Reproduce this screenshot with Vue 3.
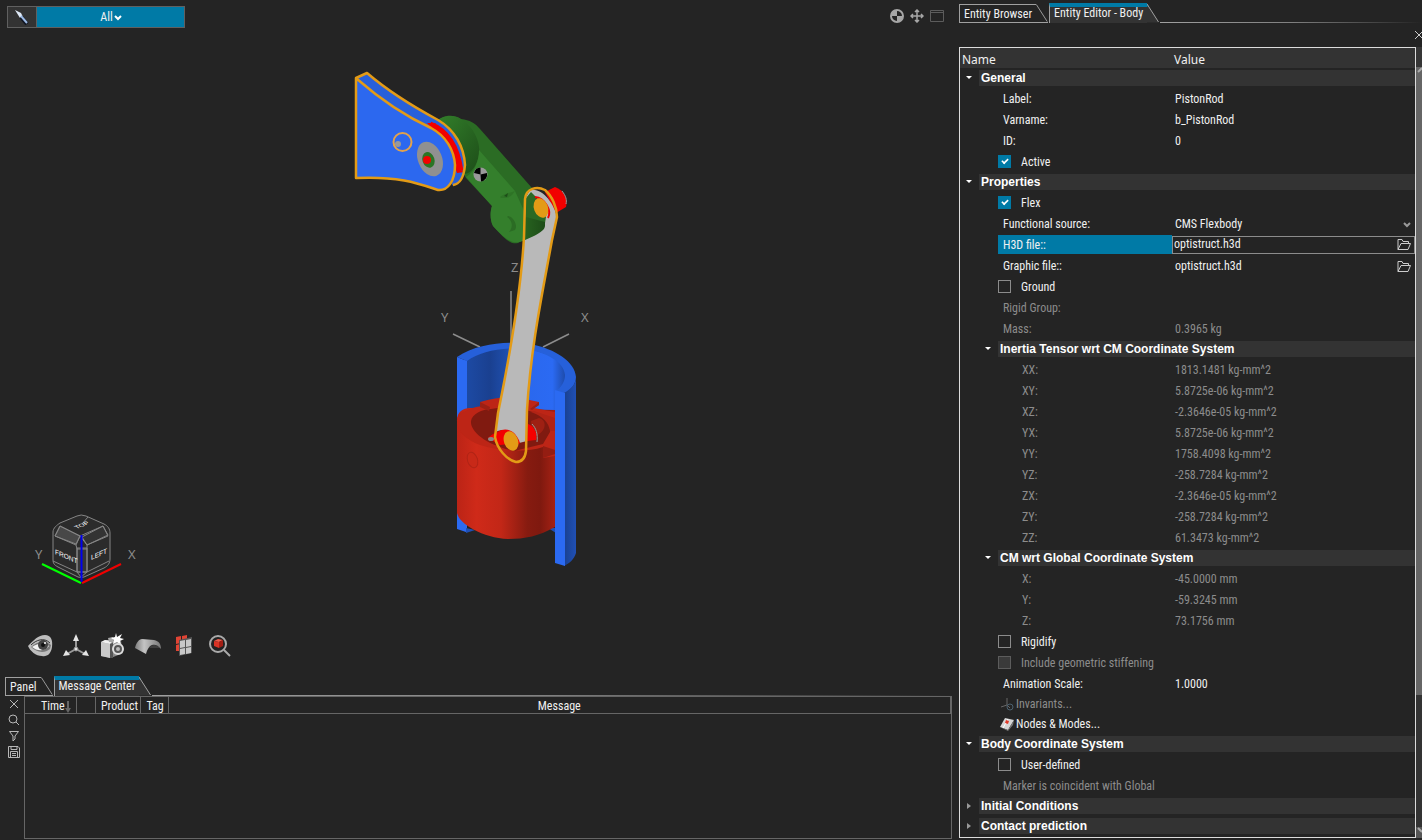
<template>
  <div class="app">
    <main class="workspace">
      <section class="stage" aria-label="Model view">
        <svg class="scene" viewBox="0 0 952 676" preserveAspectRatio="xMidYMid meet" role="img" aria-label="Piston assembly">
          <defs>
            <linearGradient id="bore" x1="0" x2="1" y1="0" y2="0">
              <stop offset="0" stop-color="#1d4ba6" />
              <stop offset="0.25" stop-color="#1a4090" />
              <stop offset="0.42" stop-color="#1f4fae" />
              <stop offset="0.62" stop-color="#2a68ee" />
              <stop offset="0.85" stop-color="#2b6af3" />
              <stop offset="1" stop-color="#1b459c" />
            </linearGradient>
            <linearGradient id="wall" x1="0" x2="1" y1="0" y2="0">
              <stop offset="0" stop-color="#19408f" />
              <stop offset="1" stop-color="#2050b5" />
            </linearGradient>
            <linearGradient id="piston" x1="0" x2="1" y1="0" y2="0">
              <stop offset="0" stop-color="#bb2416" />
              <stop offset="0.2" stop-color="#cf2a19" />
              <stop offset="0.45" stop-color="#c22717" />
              <stop offset="0.72" stop-color="#861b10" />
              <stop offset="0.85" stop-color="#7f190f" />
              <stop offset="1" stop-color="#a52114" />
            </linearGradient>
            <linearGradient id="hub" x1="0" x2="1" y1="0" y2="1">
              <stop offset="0" stop-color="#33802b" />
              <stop offset="1" stop-color="#1d4d18" />
            </linearGradient>
            <linearGradient id="boss" x1="0" x2="1" y1="0" y2="0">
              <stop offset="0" stop-color="#27621f" />
              <stop offset="1" stop-color="#1d4c18" />
            </linearGradient>
          </defs>

          <!-- global axes -->
          <g class="axis">
            <path d="M453 334 480 347M569 334 543 347M511 291V344" />
            <text x="511" y="272">Z</text>
            <text x="441" y="322">Y</text>
            <text x="581" y="322">X</text>
          </g>

          <!-- cylinder -->
          <path fill="url(#bore)" d="M464 360C480 346 530 338 568 366L568 400 555 470H464Z" />
          <path fill="#2660da" d="M457 357C478 343 508 341 530 344 556 349 575 362 576 377 576 384 571 390 564 394L555 391C561 388 565 382 565 375 564 361 545 352 524 349 500 347 480 352 467 361Z" />
          <path fill="#2b6af2" d="M457 357 467 361V529L466 532 457 529Z" />
          <path fill="#1f4fb4" d="M466 528 475 530 466 533ZM548 528H556V533Z" />

          <!-- piston -->
          <path fill="url(#piston)" d="M457 420C457 412 463 408 470 408L555 410V527C539 536 525 539 508 539 483 538 459 524 457 513Z" />
          <path fill="#bd2516" d="M457 421C456 416 464 410 476 407L482 406 480 402C494 398 507 396 520 398L539 402V405L534 408 555 412V456L543 458V447C525 453 500 451 480 445 466 440 457 431 457 421Z" />
          <path fill="#801a10" d="M471 421C472 414 482 409 491 409L510 406 533 412C545 417 551 424 550 432L543 444 514 451C487 445 470 432 471 421Z" />
          <path fill="#b02315" d="M534 411 555 418V431L550 431C549 423 543 416 531 412Z" />
          <path fill="#9c2014" d="M480 402V407L489 411 490 407ZM530 409 539 402V405L532 410Z" />
          <path fill="#941d12" d="M543 446 555 450V454L543 458Z" />
          <ellipse cx="472.500" cy="460" rx="5" ry="8" fill="#c82918" stroke="#b02416" transform="rotate(-18 472.500 460)" />
          <path fill="#9e2013" d="M531 421 539 418C547 420 546 430 539 434L532 439Z" />
          <path fill="#f40000" d="M488 438C496 430 509 427 518 437L520 443 500 445ZM528 424C534 426 538 434 536 440L527 441Z" />
          <path fill="none" stroke="#9a9a9a" d="M532 424C536 428 538 434 537 442" />
          <ellipse cx="491" cy="439" rx="3" ry="2" fill="#888" />

          <!-- cylinder cut on the right -->
          <path fill="url(#wall)" d="M564 393C571 389 576 384 576 377V553C574 559 570 563 564 566Z" />
          <path fill="#2b6af2" d="M555 390 565 393V566L555 563Z" />

          <!-- crank -->
          <path fill="#2b6c24" d="M435 123C440 117 450 113 461 119 470 120 475 123 480 129L532 188 547 205 546 225C545 232 530 236 518 243 510 245 504 238 493 226 490 220 490 212 492 206L466 178Z" />
          <path fill="url(#hub)" d="M436 122C441 116 452 113 461 119 477 129 484 150 476 164 474 169 469 174 464 174Z" />
          <path fill="#347f2c" d="M479 150 515 191 525 213V240C513 246 506 240 493 226 490 220 490 212 492 206L466 177C475 172 479 160 479 150Z" />
          <path fill="#2e7426" d="M500 197C505 193 510 193 515 191L512 195C507 199 503 198 501 198Z" />
          <path fill="#1d4d18" d="M504 196 508 193 507 197Z" />
          <path fill="#2b6c24" d="M508 216C514 217 518 226 515 230L509 232C513 228 513 221 507 217Z" />
          <path fill="#f20000" d="M545 192 555 187C564 190 568 199 566 207L556 213Z" />
          <path fill="none" stroke="#999" d="M562 191C566 196 567 200 566 204" />

          <!-- rod -->
          <path fill="#b9b9b9" d="M530 190C542 187 554 203 557 217L552 240C543 290 531 345 527 410V441L519 443C516 432 505 427 496 432L498 413C512 345 521 290 524 237L525 199Z" />
          <path fill="#2a6923" d="M526 198 531 192 538 199 546 217 544 229 524 240Z" />
          <path fill="url(#boss)" d="M526 217 545 222 545 226C544 232 534 236 525 240Z" />
          <path fill="none" stroke="#f20000" stroke-width="2" d="M535 197C545 198 552 211 548 218" />
          <ellipse cx="541" cy="208" rx="7" ry="10" fill="#e39b16" transform="rotate(-20 541 208)" />
          <path fill="#f20000" d="M498 432C506 426 516 431 520 443L511 450 503 442Z" />
          <ellipse cx="511" cy="441" rx="7" ry="10" fill="#e39b16" transform="rotate(-20 511 441)" />
          <path class="outline" d="M525 199C526 188 537 186 545 190 552 196 557 207 557 217L552 240C543 290 531 345 527 410L526 451C525 459 521 462 516 462 507 460 497 449 495 437L498 413C512 345 521 290 524 237Z" />

          <!-- bracket -->
          <path fill="#2860da" d="M357 78 367 73C388 91 412 106 438 120 455 130 464 147 465 165 464 176 461 183 453 186L430 150Z" />
          <path fill="none" stroke="#f20000" stroke-width="7" d="M430 125C448 132 457 150 460 171" />
          <path fill="#f20000" d="M427 123 436 123 432 128ZM456 169 465 172 457 173Z" />
          <path fill="#2c68ef" d="M357 79C380 99 405 116 431 128 446 136 454 150 455 165 455 181 448 191 438 190 420 184 400 176 357 178Z" />
          <path class="outline" d="M357 79C380 99 405 116 431 128 446 136 454 150 455 165 455 181 448 191 438 190 420 184 400 176 356 178V78L367 73C388 91 412 106 438 120 455 130 464 147 465 165 464 176 461 184 453 185" />
          <circle cx="402.500" cy="142" r="9" class="ring" />
          <ellipse cx="398" cy="144" rx="3" ry="3" fill="#999" />
          <ellipse cx="430" cy="159" rx="12" ry="18" fill="#909090" transform="rotate(-22 430 159)" />
          <ellipse cx="428.500" cy="160" rx="6" ry="8" fill="#2b7524" transform="rotate(-18 428 160)" />
          <circle cx="427" cy="160" r="4" fill="#f20000" />
          <circle cx="480.500" cy="174.500" r="7" fill="#999" />
          <path fill="#000" d="M480.500 174.500V167.500A7 7 0 0 0 474 173ZM480.500 174.500 487 173A7 7 0 0 1 481 181.500Z" />

          <!-- view cube -->
          <g class="cube">
            <path fill="#2b2b2b" d="M53 532C53 528 57 525 60 523L77 516Q81 514 86 516L104 524C108 526 110 529 110 533V559C110 563 108 566 104 568L84 577Q81 578 78 577L58 567C54 565 53 563 53 560Z" />
            <path fill="#484848" d="M60 526 80 536 76 544 55 536Z" />
            <path fill="#333" d="M82 537 103 526 108 535 87 545Z" />
            <path fill="#363636" d="M77 548H87V572H77Z" />
            <path fill="none" d="M60 526 80 536 103 526M60 526 55 536 76 545 80 536 87 545 108 536 103 526M76 545 77 549V572M87 545V572M77 549H87M77 572H87M53 561 77 572 81 577 87 572 109 561M82 524 88 517" />
            <text transform="matrix(.92 -.38 .7 .5 77 529)">TOP</text>
            <text transform="matrix(.94 .4 0 1 55 554)">FRONT</text>
            <text transform="matrix(.94 -.4 0 1 91 560)">LEFT</text>
            <path stroke="#00ff00" d="M42 564 81 583" />
            <path stroke="#f00000" d="M121 564 82 583" />
            <path stroke="#0000ef" d="M81.500 535V582" />
          </g>
          <g class="axis">
            <text x="35" y="559">Y</text>
            <text x="128" y="559">X</text>
          </g>
        </svg>

        <header class="stage-top">
          <div class="selector">
            <button class="pick" type="button" aria-label="Select">
              <svg width="16" height="16" viewBox="0 0 16 16">
                <path fill="#dfe9f7" d="M1 1 7 4 9 8 6 9Z" />
                <path stroke="#101522" stroke-width="4" d="M7 8 13 15" />
                <path stroke="#9dbbe6" stroke-width="2" d="M7 7 13 14" />
              </svg>
            </button>
            <select class="filter" aria-label="Entity filter">
              <option>All</option>
            </select>
            <svg class="filter-arrow" width="8" height="6" viewBox="0 0 8 6">
              <path fill="none" stroke="#fff" stroke-width="2" d="M1 1 4 4 7 1" />
            </svg>
          </div>
          <div class="window-tools">
            <button type="button" aria-label="Shading">
              <svg width="14" height="14" viewBox="0 0 14 14">
                <circle cx="7" cy="7" r="6" fill="#242424" stroke="#a6a6a6" stroke-width="2" />
                <path fill="#a6a6a6" d="M7 7V1A6 6 0 0 0 1 7ZM7 7H13A6 6 0 0 1 7 13Z" />
              </svg>
            </button>
            <button type="button" aria-label="Move">
              <svg width="14" height="14" viewBox="0 0 14 14" fill="none" stroke="#a6a6a6">
                <path stroke-width="1.500" d="M7 1V13M1 7H13M5 3 7 1 9 3M5 11 7 13 9 11M3 5 1 7 3 9M11 5 13 7 11 9" />
              </svg>
            </button>
            <button type="button" aria-label="Maximize">
              <svg width="14" height="12" viewBox="0 0 14 12" fill="none" stroke="#5c5c5c">
                <path d="M.5 .5H13.500V11.500H.5ZM1 2.500H13" />
              </svg>
            </button>
          </div>
        </header>

        <nav class="view-tools" aria-label="View controls">
          <button type="button" aria-label="Visibility">
            <svg width="26" height="24" viewBox="0 0 26 24">
              <path fill="#bdbdbd" d="M1 12C7 6 11 1 18 1 24 1 26 6 25 13 24 20 20 23 15 22 9 22 3 17 1 12Z" />
              <path fill="#777" d="M4 13C9 8 17 5 24 11L23 15C17 20 9 18 4 13Z" />
              <path fill="#f2f2f2" d="M5 13C11 9 17 8 22 12 17 18 10 17 5 13Z" />
              <circle cx="16" cy="11" r="5" fill="#444" />
              <circle cx="16" cy="11" r="2" fill="#111" />
              <circle cx="18" cy="9" r="1" fill="#fff" />
              <path fill="none" stroke="#333" d="M4 11C9 6 17 3 23 9" />
            </svg>
          </button>
          <button type="button" aria-label="Axes">
            <svg width="28" height="26" viewBox="0 0 28 26" fill="#e4e4e4" stroke="#8a8a8a">
              <path stroke="#999" stroke-width="2" d="M14 5V16L5 21M14 16 23 21" fill="none" />
              <path stroke="none" d="M14 1 17 8H11ZM1 23 4 17 8 22ZM27 23 20 22 24 17Z" />
              <circle cx="14" cy="16" r="2" />
            </svg>
          </button>
          <button type="button" aria-label="Capture">
            <svg width="26" height="26" viewBox="0 0 26 26">
              <path fill="#888" d="M2 9 6 7 22 8 24 20 12 25 2 23Z" />
              <path fill="#c9c9c9" d="M2 9 11 11V25L2 23Z" />
              <path fill="#f0f0f0" d="M2 9 6 7 14 8 11 11Z" />
              <path fill="#555" d="M11 11 14 10V25L11 25Z" />
              <path fill="#a9a9a9" d="M9 5 14 4 15 9 10 9Z" />
              <path fill="#fff" d="M17 0 18 4 23 1 21 5 25 6 21 8 22 12 18 9 14 11 15 7 12 5 16 4Z" />
              <circle cx="19" cy="16" r="5" fill="#555" stroke="#ddd" stroke-width="2" />
              <circle cx="19" cy="16" r="2" fill="#bbb" />
            </svg>
          </button>
          <button type="button" aria-label="Surface">
            <svg width="28" height="20" viewBox="0 0 28 20">
              <defs>
                <linearGradient id="sheet" x1="0" x2="1">
                  <stop offset="0" stop-color="#7d7d7d" />
                  <stop offset="0.35" stop-color="#c4c4c4" />
                  <stop offset="1" stop-color="#777" />
                </linearGradient>
              </defs>
              <path fill="#3e3e3e" d="M15 12C18 7 24 9 26 12L19 12Z" />
              <path fill="url(#sheet)" d="M1 12C2 7 5 3 8 3L20 4C25 5 27 8 27 13 24 9 21 8 18 9 15 10 13 14 12 18Z" />
            </svg>
          </button>
          <button type="button" aria-label="Mesh">
            <svg width="18" height="22" viewBox="0 0 18 22">
              <path fill="#e04434" d="M1 2 6 1V8L1 9ZM7 1 12 0V7L7 8ZM1 10 5 9V16L1 16Z" />
              <path fill="#555" d="M4 5 17 2V18L4 21Z" />
              <path fill="#c8c8c8" d="M5 6 10 5V12L5 13ZM11 5 16 4V11L11 12ZM5 14 10 13V19L5 20ZM11 13 16 12V18L11 19Z" />
            </svg>
          </button>
          <button type="button" aria-label="Find">
            <svg width="24" height="24" viewBox="0 0 24 24">
              <path stroke="#aaa" stroke-width="2" d="M16 16 22 22" />
              <circle cx="10" cy="10" r="8" fill="#222" stroke="#aaa" stroke-width="2" />
              <path fill="#ef5b4a" d="M6 7 10 5 15 6 11 8Z" />
              <path fill="#d93325" d="M6 7 11 8V14L6 12Z" />
              <path fill="#a31e14" d="M11 8 15 6V12L11 14Z" />
            </svg>
          </button>
        </nav>
      </section>

      <section class="messages" aria-label="Messages">
        <div class="tabs" role="tablist">
          <button v-for="tab in messageTabs" :key="tab.name" class="tab" :class="{ active: tab.active }" type="button" role="tab" :aria-selected="tab.active">
            <span class="tab-label">{{ tab.name }}</span>
            <svg class="tab-slope" width="12" height="19" viewBox="0 0 12 19">
              <path v-if="tab.active" fill="#333" d="M0 0 12 19H0Z" />
              <path v-if="tab.active" fill="#007aa6" d="M0 0 2 3H0Z" />
              <path fill="none" stroke="#a0a0a0" d="M0 .5 11.500 18.500" />
            </svg>
          </button>
          <span class="tab-line"></span>
        </div>
        <div class="message-body">
          <div class="message-tools">
            <button type="button" aria-label="Clear">
              <svg width="12" height="12" viewBox="0 0 12 12"><path d="M2 2 10 10M10 2 2 10" /></svg>
            </button>
            <button type="button" aria-label="Search">
              <svg width="12" height="12" viewBox="0 0 12 12"><circle cx="5" cy="5" r="4" /><path d="M8 8 11 11" /></svg>
            </button>
            <button type="button" aria-label="Filter">
              <svg width="12" height="12" viewBox="0 0 12 12"><path d="M1.500 1.500H10.500L7 6V9L5 11V6Z" /></svg>
            </button>
            <button type="button" aria-label="Save">
              <svg width="12" height="12" viewBox="0 0 12 12"><path d="M.5 .5H10L11.500 2V11.500H.5ZM3 1V3.500H9V1M2.500 11V5.500H9.500V11M4 7.500H8M4 9.500H8" /></svg>
            </button>
          </div>
          <div class="log">
            <table>
              <thead>
                <tr>
                  <th class="time">Time
                    <svg width="6" height="12" viewBox="0 0 6 12"><path fill="#666" d="M2 0H4V7H6L3 12 0 7H2Z" /></svg>
                  </th>
                  <th class="kind"></th>
                  <th class="product">Product</th>
                  <th class="tag">Tag</th>
                  <th>Message</th>
                </tr>
              </thead>
            </table>
          </div>
        </div>
      </section>
    </main>

    <aside class="editor">
      <div class="tabs" role="tablist">
        <button v-for="tab in editorTabs" :key="tab.name" class="tab" :class="{ active: tab.active }" type="button" role="tab" :aria-selected="tab.active">
          <span class="tab-label">{{ tab.name }}</span>
          <svg class="tab-slope" width="12" height="19" viewBox="0 0 12 19">
            <path v-if="tab.active" fill="#333" d="M0 0 12 19H0Z" />
            <path v-if="tab.active" fill="#007aa6" d="M0 0 2 3H0Z" />
            <path fill="none" stroke="#a0a0a0" d="M0 .5 11.500 18.500" />
          </svg>
        </button>
        <span class="tab-line"></span>
      </div>
      <div class="editor-bar">
        <button type="button" aria-label="Close">
          <svg width="8" height="8" viewBox="0 0 8 8"><path stroke="#ccc" d="M0 0 8 8M8 0 0 8" /></svg>
        </button>
      </div>
      <div class="editor-body">
        <div class="sheet">
          <table class="props">
            <thead>
              <tr>
                <th class="name-col">Name</th>
                <th>Value</th>
              </tr>
            </thead>
            <tbody>
              <tr v-for="row in rows" :key="row.id" :class="['row-' + row.type, { selected: row.selected, disabled: row.disabled, deep: row.deep }]">
                <td v-if="row.type === 'section'" colspan="2">
                  <button class="section" type="button" :aria-expanded="!row.closed">
                    <span class="section-arrow">
                      <svg v-if="row.closed" width="4" height="6" viewBox="0 0 4 6"><path fill="#999" d="M0 0 4 3 0 6Z" /></svg>
                      <svg v-else width="6" height="4" viewBox="0 0 6 4"><path fill="#fff" d="M0 0H6L3 3Z" /></svg>
                    </span>
                    <span class="section-name">{{ row.label }}</span>
                  </button>
                </td>
                <td v-else-if="row.type === 'check'" colspan="2">
                  <label class="check">
                    <input type="checkbox" :checked="row.checked" :disabled="row.disabled" />
                    <span>{{ row.label }}</span>
                  </label>
                </td>
                <td v-else-if="row.type === 'action'" colspan="2">
                  <button class="action" type="button" :disabled="row.disabled">
                    <svg v-if="row.disabled" width="16" height="16" viewBox="0 0 16 16" fill="none" stroke="#666">
                      <path d="M8 2V9L2 11M8 9 11 12" />
                      <circle cx="11" cy="11" r="3" stroke="#4b6170" />
                    </svg>
                    <svg v-else width="16" height="16" viewBox="0 0 16 16">
                      <path fill="#d5d5d5" d="M6 2 15 4 9 14 1 11Z" />
                      <path fill="#777" d="M1 11 9 14 15 4 14 9 9 15Z" />
                      <path stroke="#fff" d="M9 3 4 12" />
                      <path fill="#e03a2a" d="M7 4 10 5 9 8 6 7Z" />
                    </svg>
                    <span>{{ row.label }}</span>
                  </button>
                </td>
                <td v-else-if="row.type === 'note'" colspan="2" class="name">{{ row.label }}</td>
                <template v-else>
                  <td class="name">
                    <label v-if="row.type !== 'text'" :for="row.id">{{ row.label }}</label>
                    <template v-else>{{ row.label }}</template>
                  </td>
                  <td class="value">
                    <div v-if="row.type === 'select'" class="field">
                      <select :id="row.id"><option>{{ row.value }}</option></select>
                      <svg class="select-arrow" width="8" height="6" viewBox="0 0 8 6"><path fill="none" stroke="#999" stroke-width="2" d="M1 1 4 4 7 1" /></svg>
                    </div>
                    <div v-else-if="row.type === 'file'" class="field">
                      <input :id="row.id" type="text" :value="row.value" />
                      <button class="browse" type="button" aria-label="Browse">
                        <svg width="14" height="11" viewBox="0 0 14 11" fill="none" stroke="#ccc">
                          <path d="M1 10.500V.5H5L6 2.500H11.500V4.500M1 10.500 4 4.500H13.500L11 10.500Z" />
                        </svg>
                      </button>
                    </div>
                    <div v-else-if="row.type === 'input'" class="field">
                      <input :id="row.id" type="text" :value="row.value" />
                    </div>
                    <template v-else>{{ row.value }}</template>
                  </td>
                </template>
              </tr>
            </tbody>
          </table>
        </div>
        <div class="scrollbar" aria-hidden="true">
          <span class="scroll-gap"></span>
          <span class="scroll-thumb"><svg width="6" height="6" viewBox="0 0 6 6"><path stroke="#aaa" stroke-width="2" d="M2 5 6 1" /></svg></span>
          <span class="scroll-track"></span>
          <span class="scroll-end"><svg width="6" height="6" viewBox="0 0 6 6"><path stroke="#aaa" stroke-width="2" d="M2 1 6 5" /></svg></span>
        </div>
      </div>
    </aside>
  </div>
</template>

<script setup>
const messageTabs = [
  { name: 'Panel', active: false },
  { name: 'Message Center', active: true }
]

const editorTabs = [
  { name: 'Entity Browser', active: false },
  { name: 'Entity Editor - Body', active: true }
]

const text = (id, label, value, deep = false) => ({ id, type: 'text', label, value, deep, disabled: true })

const rows = [
  { id: 'general', type: 'section', label: 'General' },
  { id: 'label', type: 'input', label: 'Label:', value: 'PistonRod' },
  { id: 'varname', type: 'input', label: 'Varname:', value: 'b_PistonRod' },
  { id: 'entity-id', type: 'input', label: 'ID:', value: '0' },
  { id: 'active', type: 'check', label: 'Active', checked: true },
  { id: 'properties', type: 'section', label: 'Properties' },
  { id: 'flex', type: 'check', label: 'Flex', checked: true },
  { id: 'source', type: 'select', label: 'Functional source:', value: 'CMS Flexbody' },
  { id: 'h3d', type: 'file', label: 'H3D file::', value: 'optistruct.h3d', selected: true },
  { id: 'graphic', type: 'file', label: 'Graphic file::', value: 'optistruct.h3d' },
  { id: 'ground', type: 'check', label: 'Ground' },
  text('rigid', 'Rigid Group:', ''),
  text('mass', 'Mass:', '0.3965 kg'),
  { id: 'inertia', type: 'section', label: 'Inertia Tensor wrt CM Coordinate System', deep: true },
  text('xx', 'XX:', '1813.1481 kg-mm^2', true),
  text('xy', 'XY:', '5.8725e-06 kg-mm^2', true),
  text('xz', 'XZ:', '-2.3646e-05 kg-mm^2', true),
  text('yx', 'YX:', '5.8725e-06 kg-mm^2', true),
  text('yy', 'YY:', '1758.4098 kg-mm^2', true),
  text('yz', 'YZ:', '-258.7284 kg-mm^2', true),
  text('zx', 'ZX:', '-2.3646e-05 kg-mm^2', true),
  text('zy', 'ZY:', '-258.7284 kg-mm^2', true),
  text('zz', 'ZZ:', '61.3473 kg-mm^2', true),
  { id: 'cm', type: 'section', label: 'CM wrt Global Coordinate System', deep: true },
  text('x', 'X:', '-45.0000 mm', true),
  text('y', 'Y:', '-59.3245 mm', true),
  text('z', 'Z:', '73.1756 mm', true),
  { id: 'rigidify', type: 'check', label: 'Rigidify' },
  { id: 'stiffening', type: 'check', label: 'Include geometric stiffening', disabled: true },
  { id: 'scale', type: 'input', label: 'Animation Scale:', value: '1.0000' },
  { id: 'invariants', type: 'action', label: 'Invariants...', disabled: true },
  { id: 'modes', type: 'action', label: 'Nodes & Modes...' },
  { id: 'body-cs', type: 'section', label: 'Body Coordinate System' },
  { id: 'user-defined', type: 'check', label: 'User-defined' },
  { id: 'marker', type: 'note', label: 'Marker is coincident with Global', disabled: true },
  { id: 'initial', type: 'section', label: 'Initial Conditions', closed: true },
  { id: 'contact', type: 'section', label: 'Contact prediction', closed: true }
]
</script>

<style>
body {
  margin: 0;
  background: #242424;
}
</style>

<style scoped>
.app {
  display: grid;
  grid-template-columns: minmax(0, 1fr) 463px;
  gap: 7px;
  height: 100vh;
  overflow: hidden;
  background: #242424;
  color: #f0f0f0;
  font-family: "Roboto Condensed", Roboto, sans-serif;
  font-size: 12px;
}

button,
input,
select {
  margin: 0;
  padding: 0;
  border: 0;
  border-radius: 0;
  background: none;
  color: inherit;
  font: inherit;
  appearance: none;
  outline: none;
}

svg {
  display: block;
  flex: none;
}

table {
  width: 100%;
  border-collapse: collapse;
  table-layout: fixed;
}

.workspace {
  display: flex;
  flex-direction: column;
  min-width: 0;
}

.stage {
  position: relative;
  display: flex;
  flex: 1;
  flex-direction: column;
  justify-content: space-between;
  min-height: 0;
}

.scene {
  position: absolute;
  inset: 0;
  width: 100%;
  height: 100%;
}

.axis {
  fill: #8c8c8c;
  font-family: "Noto Sans", sans-serif;
  font-size: 13px;
}

.axis path {
  fill: none;
  stroke: #8c8c8c;
  stroke-width: 1.5;
}

.outline {
  fill: none;
  stroke: #e39b16;
  stroke-width: 2.5;
  stroke-linejoin: round;
}

.ring {
  fill: none;
  stroke: #e3a24a;
  stroke-width: 2;
}

.cube {
  stroke: #858585;
  stroke-width: 1;
}

.cube text {
  fill: #fff;
  stroke: none;
  font-size: 7px;
  font-family: "Liberation Sans", sans-serif;
}

.cube path[stroke] {
  stroke-width: 2;
}

.stage-top,
.view-tools {
  position: relative;
  display: flex;
}

.stage-top {
  align-items: flex-start;
  justify-content: space-between;
  padding: 6px 8px 6px 7px;
}

.selector {
  position: relative;
  display: flex;
  width: 178px;
  height: 22px;
  box-sizing: border-box;
  border: 1px solid #606060;
}

.pick {
  display: flex;
  width: 29px;
  align-items: center;
  justify-content: center;
  border-right: 1px solid #606060;
  background: #333;
}

.filter {
  flex: 1;
  padding-right: 8px;
  background: #007aa6;
  text-align-last: center;
}

.filter-arrow {
  position: absolute;
  top: 8px;
  left: 106px;
  pointer-events: none;
}

.window-tools {
  display: flex;
  height: 20px;
  align-items: center;
  gap: 6px;
}

.view-tools {
  padding: 0 22px 16px;
}

.view-tools button {
  display: flex;
  width: 36px;
  height: 28px;
  align-items: center;
  justify-content: center;
}

.messages {
  display: flex;
  flex-direction: column;
  height: 164px;
}

.tabs {
  display: flex;
  align-items: flex-end;
  height: 20px;
}

.messages .tabs {
  padding-left: 5px;
}

.tab {
  display: flex;
  margin-right: 1px;
}

.tab-label {
  box-sizing: border-box;
  height: 19px;
  padding: 0 4px;
  border: 1px solid #a0a0a0;
  border-right: 0;
  line-height: 18px;
}

.tab .tab-slope {
  border-bottom: 1px solid #a0a0a0;
  box-sizing: border-box;
}

.tab.active .tab-label {
  height: 20px;
  border-top: 4px solid #007aa6;
  border-bottom: 0;
  background: #333;
  line-height: 13px;
}

.tab.active .tab-slope {
  height: 20px;
  border-bottom: 0;
}

.tab-line {
  flex: 1;
  height: 1px;
  background: linear-gradient(90deg, #a0a0a0, #808080 50%, #242424);
}

.message-body {
  display: flex;
  flex: 1;
  padding-bottom: 1px;
}

.message-tools {
  display: flex;
  width: 24px;
  flex-direction: column;
}

.message-tools button {
  display: flex;
  height: 16px;
  align-items: center;
  padding-left: 8px;
}

.message-tools svg {
  fill: none;
  stroke: #b8b8b8;
}

.log {
  flex: 1;
  border: 1px solid #666;
}

.log th {
  height: 14px;
  padding: 2px 0 0;
  border-right: 1px solid #666;
  border-bottom: 1px solid #666;
  font-weight: 400;
  line-height: 14px;
}

.log .time {
  width: 51px;
  padding-left: 16px;
  box-sizing: border-box;
  text-align: left;
  white-space: nowrap;
}

.time svg {
  display: inline-block;
  margin-left: -2px;
  vertical-align: middle;
}

.log .kind {
  width: 18px;
}

.log .product {
  width: 45px;
  box-sizing: border-box;
  padding-left: 4px;
}

.log .tag {
  width: 28px;
  padding-left: 2px;
  box-sizing: border-box;
}

.editor {
  display: flex;
  flex-direction: column;
  min-width: 0;
}

.editor .tabs {
  height: 23px;
}

.editor-bar {
  display: flex;
  height: 24px;
  align-items: center;
  justify-content: flex-end;
}

.editor-bar svg {
  margin-right: -1px;
}

.editor-body {
  display: flex;
  flex: 1;
  min-height: 0;
  padding-bottom: 2px;
}

.sheet {
  flex: 1;
  overflow: hidden;
  border: 1px solid #dcdcdc;
}

.props th {
  height: 17px;
  padding: 3px 2px 0;
  background: #333;
  font-family: "Noto Sans", sans-serif;
  font-size: 12px;
  font-weight: 400;
  line-height: 17px;
  text-align: left;
}

.props .name-col {
  width: 208px;
}

.props td {
  height: 19px;
  padding: 2px 0 0;
  line-height: 19px;
  white-space: nowrap;
}

.props .row-section td,
.props .row-action td {
  height: 20px;
  padding: 0;
  line-height: 20px;
}

.section {
  display: flex;
  width: 100%;
  height: 20px;
  align-items: center;
}

.section-arrow {
  display: flex;
  width: 18px;
  padding-right: 1px;
  justify-content: center;
}

.deep .section-arrow {
  padding-left: 19px;
}

.section-name {
  flex: 1;
  height: 16px;
  padding-left: 2px;
  background: #333;
  color: #fff;
  font-family: "Liberation Sans", sans-serif;
  font-size: 12px;
  font-weight: 700;
  line-height: 16px;
  text-align: left;
}

.props .name {
  padding-left: 43px;
}

.props .deep .name {
  padding-left: 62px;
}

.props .value {
  padding-left: 3px;
}

.disabled {
  color: #8c8c8c;
}

.props .row-check td {
  height: 21px;
  padding-top: 0;
}

.check {
  display: flex;
  height: 21px;
  align-items: center;
  gap: 10px;
  padding-left: 38px;
}

.check span {
  padding-top: 2px;
}

.check input {
  display: grid;
  width: 13px;
  height: 13px;
  box-sizing: border-box;
  border: 1px solid #8c8c8c;
  place-items: center;
}

.check input:checked {
  border-color: #007aa6;
  background: #007aa6;
}

.check input:checked::after {
  width: 6px;
  height: 3px;
  margin-top: -2px;
  border-bottom: 2px solid #fff;
  border-left: 2px solid #fff;
  box-sizing: content-box;
  content: "";
  transform: rotate(-45deg) scale(0.8);
}

.check input:disabled {
  border-color: #5c5c5c;
  background: #3a3a3a;
}

.action {
  display: flex;
  height: 20px;
  align-items: center;
  gap: 1px;
  padding-left: 39px;
}

.field {
  display: flex;
  height: 19px;
  align-items: center;
  padding-right: 4px;
}

.field input,
.field select {
  flex: 1;
  min-width: 0;
}

.selected .name {
  background: linear-gradient(#007aa6, #007aa6) right / 174px 19px no-repeat;
}

.props .selected .value {
  height: 21px;
  padding: 0;
}

.selected .field {
  height: 16px;
  padding: 0 3px 0 1px;
  border: 1px solid #8c8c8c;
}

.scrollbar {
  display: flex;
  width: 6px;
  flex-direction: column;
}

.scroll-gap {
  height: 20px;
  background: #363636;
}

.scroll-thumb {
  flex: 157;
  background: #666;
}

.scroll-track {
  flex: 33;
  background: #333;
}

.scroll-end {
  height: 11px;
  background: #555;
}
</style>
